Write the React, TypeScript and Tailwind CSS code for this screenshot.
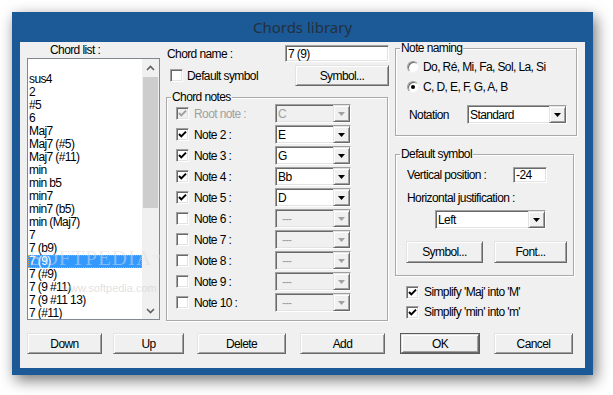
import React from "react";

const sunken =
  "border border-t-[#a0a0a0] border-l-[#a0a0a0] border-b-white border-r-white shadow-[inset_1px_1px_0_#696969,inset_-1px_-1px_0_#e3e3e3]";
const raised =
  "border border-t-[#e3e3e3] border-l-[#e3e3e3] border-b-[#696969] border-r-[#696969] shadow-[inset_1px_1px_0_#ffffff,inset_-1px_-1px_0_#a0a0a0]";

const chords = [
  "",
  "sus4",
  "2",
  "#5",
  "6",
  "Maj7",
  "Maj7 (#5)",
  "Maj7 (#11)",
  "min",
  "min b5",
  "min7",
  "min7 (b5)",
  "min (Maj7)",
  "7",
  "7 (b9)",
  "7 (9)",
  "7 (#9)",
  "7 (9 #11)",
  "7 (9 #11 13)",
  "7 (#11)",
];

const notes = [
  { label: "Root note :", value: "C", on: true, disabled: true },
  { label: "Note 2 :", value: "E", on: true },
  { label: "Note 3 :", value: "G", on: true },
  { label: "Note 4 :", value: "Bb", on: true },
  { label: "Note 5 :", value: "D", on: true },
  { label: "Note 6 :", value: "---", on: false, empty: true },
  { label: "Note 7 :", value: "---", on: false, empty: true },
  { label: "Note 8 :", value: "---", on: false, empty: true },
  { label: "Note 9 :", value: "---", on: false, empty: true },
  { label: "Note 10 :", value: "---", on: false, empty: true },
];

const Check = ({ on, disabled }: { on: boolean; disabled?: boolean }) => (
  <div
    className={`w-[13px] h-[13px] shrink-0 flex items-center justify-center ${sunken} ${
      disabled ? "bg-[#f0f0f0]" : "bg-white"
    }`}
  >
    {on && (
      <svg width="9" height="9" viewBox="0 0 9 9">
        <polyline
          points="1,4 3.3,6.4 8,1.6"
          fill="none"
          stroke={disabled ? "#a0a0a0" : "#000"}
          strokeWidth="2"
        />
      </svg>
    )}
  </div>
);

const Radio = ({ on }: { on: boolean }) => (
  <div className="w-[12px] h-[12px] shrink-0 rounded-full bg-white border border-t-[#a0a0a0] border-l-[#a0a0a0] border-b-[#f4f4f4] border-r-[#f4f4f4] shadow-[inset_1px_1px_0_#696969] flex items-center justify-center">
    {on && <div className="w-[4px] h-[4px] rounded-full bg-black" />}
  </div>
);

const Tri = ({ gray }: { gray?: boolean }) => (
  <svg width="7" height="4" viewBox="0 0 7 4">
    <polygon points="0,0 7,0 3.5,4" fill={gray ? "#a0a0a0" : "#000"} />
  </svg>
);

const Combo = ({
  value,
  disabled,
  className,
}: {
  value: string;
  disabled?: boolean;
  className: string;
}) => (
  <div className={`flex ${sunken} ${disabled ? "bg-[#f0f0f0]" : "bg-white"} ${className}`}>
    <div
      className={`flex-1 pl-[2px] flex items-center ${
        disabled ? "text-[#a0a0a0]" : "text-black"
      }`}
    >
      {value === "---" ? <span className="tracking-[-1px] pl-[4px]">---</span> : value}
    </div>
    <div className={`w-[17px] bg-[#f0f0f0] flex items-center justify-center ${raised}`}>
      <Tri gray={disabled} />
    </div>
  </div>
);

const Btn = ({
  children,
  className,
  isDefault,
}: {
  children: React.ReactNode;
  className: string;
  isDefault?: boolean;
}) =>
  isDefault ? (
    <div className={`border border-[#5a5a5a] flex ${className}`}>
      <div className={`flex-1 bg-[#f0f0f0] flex items-center justify-center ${raised}`}>
        {children}
      </div>
    </div>
  ) : (
    <div className={`bg-[#f0f0f0] flex items-center justify-center ${raised} ${className}`}>
      {children}
    </div>
  );

const Edit = ({ value, className }: { value: string; className: string }) => (
  <div className={`bg-white flex items-center pl-[2px] ${sunken} ${className}`}>{value}</div>
);

const Group = ({
  title,
  className,
  children,
}: {
  title: string;
  className: string;
  children: React.ReactNode;
}) => (
  <fieldset
    className={`border border-[#a9a9a9] shadow-[inset_1px_1px_0_#ffffff,1px_1px_0_#ffffff] ${className}`}
  >
    <legend className="ml-[4px] px-[1px] leading-[12px]">{title}</legend>
    {children}
  </fieldset>
);

export default function App() {
  return (
    <div className="w-[613px] h-[395px] bg-white overflow-hidden pt-[12px] pl-[12px]">
      <div className="w-[581px] h-[363px] bg-[#1b5a97] shadow-[3px_5px_14px_rgba(0,0,0,0.55)] flex flex-col">
        <div className="h-[30px] flex items-center justify-center text-[15px] text-[#24303c] font-['Noto_Sans',sans-serif]">
          Chords library
        </div>
        <div className="mx-[8px] h-[326px] bg-[#f0f0f0] flex flex-col relative text-[12px] tracking-[-0.6px] leading-[14px] text-black font-['Liberation_Sans',Arial,sans-serif]">
          <div className="flex h-[291px]">
            {/* chord list */}
            <div className="ml-[7px] w-[133px] flex flex-col">
              <div className="mt-[1px] h-[14px] pl-[23px]">Chord list :</div>
              <div className="mt-[1px] h-[262px] border border-[#828790] bg-white flex overflow-hidden">
                <div className="flex-1 pt-[1px]">
                  {chords.map((c, i) =>
                    i === 15 ? (
                      <div
                        key={i}
                        className="h-[13px] leading-[11px] bg-[#3399ff] text-white border border-dotted border-[#e8a040] whitespace-nowrap"
                      >
                        {c}
                      </div>
                    ) : (
                      <div key={i} className="h-[13px] leading-[13px] pl-[1px] whitespace-nowrap">
                        {c}
                      </div>
                    )
                  )}
                </div>
                <div className="w-[17px] bg-[#f0f0f0] flex flex-col">
                  <div className="h-[18px] flex items-center justify-center">
                    <svg width="9" height="6" viewBox="0 0 9 6">
                      <polyline points="1,5 4.5,1.5 8,5" fill="none" stroke="#606060" strokeWidth="1.6" />
                    </svg>
                  </div>
                  <div className="mx-[1px] h-[131px] bg-[#cdcdcd]" />
                  <div className="flex-1" />
                  <div className="h-[17px] flex items-center justify-center">
                    <svg width="9" height="6" viewBox="0 0 9 6">
                      <polyline points="1,1 4.5,4.5 8,1" fill="none" stroke="#606060" strokeWidth="1.6" />
                    </svg>
                  </div>
                </div>
              </div>
            </div>

            {/* middle */}
            <div className="ml-[6px] w-[223px] flex flex-col">
              <div className="mt-[3px] h-[17px] flex items-center">
                <span className="ml-[1px]">Chord name :</span>
                <Edit value="7 (9)" className="ml-auto w-[104px] h-[17px]" />
              </div>
              <div className="mt-[3px] h-[21px] flex items-center">
                <div className="ml-[4px]">
                  <Check on={false} />
                </div>
                <span className="ml-[4px]">Default symbol</span>
                <Btn className="ml-auto w-[94px] h-[21px]">Symbol...</Btn>
              </div>
              <Group title="Chord notes" className="mt-[5px] w-[222px] h-[230px]">
                <div className="flex flex-col">
                  {notes.map((n) => (
                    <div key={n.label} className="h-[21px] flex items-center pl-[9px]">
                      <Check on={n.on} disabled={n.disabled} />
                      <span
                        className={`ml-[5px] w-[81px] ${n.disabled ? "text-[#a0a0a0]" : ""}`}
                      >
                        {n.label}
                      </span>
                      <Combo
                        value={n.value}
                        disabled={n.disabled || n.empty}
                        className="w-[76px] h-[19px]"
                      />
                    </div>
                  ))}
                </div>
              </Group>
            </div>

            {/* right */}
            <div className="ml-[6px] w-[182px] flex flex-col">
              <Group title="Note naming" className="w-[182px] h-[94px]">
                <div className="mt-[3px] h-[20px] flex items-center pl-[11px]">
                  <Radio on={false} />
                  <span className="ml-[4px]">Do, Ré, Mi, Fa, Sol, La, Si</span>
                </div>
                <div className="h-[20px] flex items-center pl-[11px]">
                  <Radio on={true} />
                  <span className="ml-[4px]">C, D, E, F, G, A, B</span>
                </div>
                <div className="mt-[8px] h-[19px] flex items-center">
                  <span className="pl-[13px] w-[71px]">Notation</span>
                  <Combo value="Standard" className="w-[100px] h-[19px]" />
                </div>
              </Group>

              <Group title="Default symbol" className="mt-[12px] w-[179px] h-[128px]">
                <div className="mt-[7px] h-[16px] flex items-center">
                  <span className="pl-[11px] w-[117px]">Vertical position :</span>
                  <Edit value="-24" className="w-[34px] h-[16px]" />
                </div>
                <div className="mt-[8px] h-[14px] pl-[11px]">Horizontal justification :</div>
                <Combo value="Left" className="mt-[5px] ml-[39px] w-[111px] h-[19px]" />
                <div className="mt-[12px] flex">
                  <Btn className="ml-[10px] w-[77px] h-[22px]">Symbol...</Btn>
                  <Btn className="ml-[11px] w-[73px] h-[22px]">Font...</Btn>
                </div>
              </Group>

              <div className="mt-[6px] h-[20px] flex items-center pl-[11px]">
                <Check on={true} />
                <span className="ml-[5px]">Simplify 'Maj' into 'M'</span>
              </div>
              <div className="h-[20px] flex items-center pl-[11px]">
                <Check on={true} />
                <span className="ml-[5px]">Simplify 'min' into 'm'</span>
              </div>
            </div>
          </div>

          <div className="flex h-[21px]">
            <Btn className="ml-[7px] w-[75px] h-[21px]">Down</Btn>
            <Btn className="ml-[11px] w-[71px] h-[21px]">Up</Btn>
            <Btn className="ml-[13px] w-[89px] h-[21px]">Delete</Btn>
            <Btn className="ml-[14px] w-[85px] h-[21px]">Add</Btn>
            <Btn isDefault className="ml-[15px] w-[80px] h-[21px]">
              OK
            </Btn>
            <Btn className="ml-[14px] w-[79px] h-[21px]">Cancel</Btn>
          </div>

          {/* watermark */}
          <div className="absolute left-[10px] top-[209px] text-[21px] tracking-[1px] text-[#dcdcdc]/50 font-['Liberation_Serif',serif] pointer-events-none">
            SOFTPEDIA<sup className="text-[9px]">™</sup>
          </div>
          <div className="absolute left-[42px] top-[239px] text-[11px] tracking-normal text-[#cccccc]/60 font-['Liberation_Sans',sans-serif] pointer-events-none">
            www.softpedia.com
          </div>
        </div>
      </div>
    </div>
  );
}
